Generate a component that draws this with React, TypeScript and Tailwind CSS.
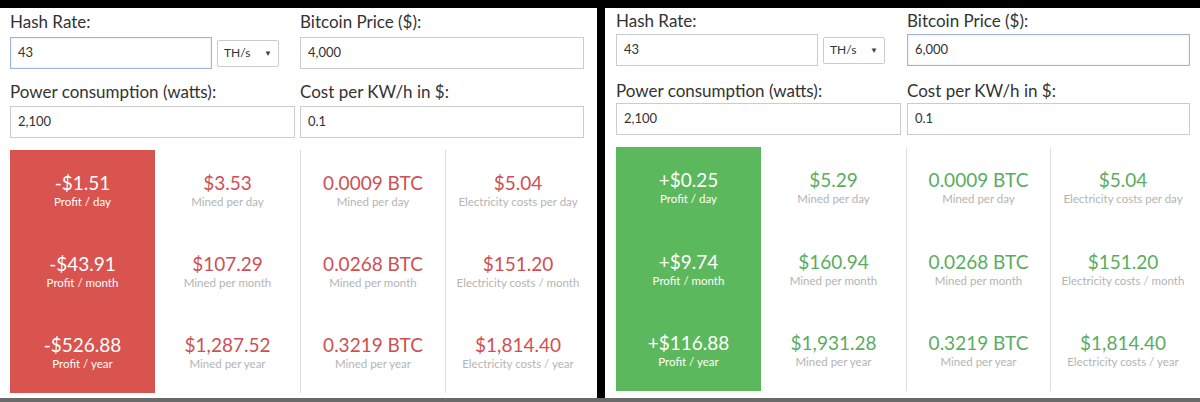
import React from "react";

type Cell = { v: string; l: string };

const leftData = {
  profit: [
    { v: "-$1.51", l: "Profit / day" },
    { v: "-$43.91", l: "Profit / month" },
    { v: "-$526.88", l: "Profit / year" },
  ],
  cols: [
    [
      { v: "$3.53", l: "Mined per day" },
      { v: "$107.29", l: "Mined per month" },
      { v: "$1,287.52", l: "Mined per year" },
    ],
    [
      { v: "0.0009 BTC", l: "Mined per day" },
      { v: "0.0268 BTC", l: "Mined per month" },
      { v: "0.3219 BTC", l: "Mined per year" },
    ],
    [
      { v: "$5.04", l: "Electricity costs per day" },
      { v: "$151.20", l: "Electricity costs / month" },
      { v: "$1,814.40", l: "Electricity costs / year" },
    ],
  ],
};

const rightData = {
  profit: [
    { v: "+$0.25", l: "Profit / day" },
    { v: "+$9.74", l: "Profit / month" },
    { v: "+$116.88", l: "Profit / year" },
  ],
  cols: [
    [
      { v: "$5.29", l: "Mined per day" },
      { v: "$160.94", l: "Mined per month" },
      { v: "$1,931.28", l: "Mined per year" },
    ],
    leftData.cols[1],
    leftData.cols[2],
  ],
};

function Field({ value, focused }: { value: string; focused?: boolean }) {
  return (
    <div
      className={
        focused
          ? "h-[32px] border border-[#9fb4dc] shadow-[inset_0_0_2px_rgba(120,150,210,0.35)] bg-white flex items-center px-[7px] text-[13px] text-[#333]"
          : "h-[32px] border border-[#cccccc] bg-white flex items-center px-[7px] text-[13px] text-[#333]"
      }
    >
      {value}
    </div>
  );
}

function Select() {
  return (
    <div className="w-[62px] h-[27px] border border-[#cccccc] rounded-[2px] bg-white flex items-center justify-between pl-[6px] pr-[6px] text-[12px] text-[#333]">
      <span>TH/s</span>
      <span className="text-[8px] text-[#444]">▼</span>
    </div>
  );
}

function ResultCol({
  cells,
  kind,
  border,
}: {
  cells: Cell[];
  kind: "loss" | "profit" | "lossText" | "profitText";
  border?: boolean;
}) {
  const box =
    kind === "loss"
      ? "bg-[#d9534f]"
      : kind === "profit"
      ? "bg-[#5cb85c]"
      : "";
  const valueColor =
    kind === "loss" || kind === "profit"
      ? "text-white"
      : kind === "lossText"
      ? "text-[#cf4f52]"
      : "text-[#5aad5e]";
  const labelColor =
    kind === "loss" || kind === "profit" ? "text-white" : "text-[#b4b4b4]";
  return (
    <div
      className={`${box} ${border ? "border-l border-[#dedede]" : ""} h-full flex flex-col justify-between items-center py-[22px] text-center`}
    >
      {cells.map((c, i) => (
        <div key={i} className="flex flex-col items-center">
          <div className={`text-[19px] leading-[22px] ${valueColor}`}>{c.v}</div>
          <div className={`text-[11.5px] leading-[15px] ${labelColor}`}>{c.l}</div>
        </div>
      ))}
    </div>
  );
}

function Panel({ side }: { side: "left" | "right" }) {
  const isLeft = side === "left";
  const data = isLeft ? leftData : rightData;
  const labelTop = `text-[17px] leading-[20px] text-[#333] ${isLeft ? "mb-[5px]" : "mb-[3px]"}`;
  const labelBottom = `text-[17px] leading-[20px] text-[#333] ${isLeft ? "mb-[4px]" : "mb-[2px]"}`;
  return (
    <div
      className={
        isLeft
          ? "w-[597px] bg-white pl-[10px] pt-[4px]"
          : "flex-1 bg-white pl-[11px] pt-[3px]"
      }
    >
      <div
        className={
          isLeft
            ? "grid grid-cols-[285px_284px] gap-x-[5px]"
            : "grid grid-cols-[285px_283px] gap-x-[6px]"
        }
      >
        <div>
          <div className={labelTop}>Hash Rate:</div>
          <div className="flex items-center gap-[5px]">
            <div className="w-[202px]">
              <Field value="43" focused={isLeft} />
            </div>
            <Select />
          </div>
        </div>
        <div>
          <div className={labelTop}>Bitcoin Price ($):</div>
          <Field value={isLeft ? "4,000" : "6,000"} focused={!isLeft} />
        </div>
        <div className={isLeft ? "mt-[13px]" : "mt-[15px]"}>
          <div className={labelBottom}>Power consumption (watts):</div>
          <Field value="2,100" />
        </div>
        <div className={isLeft ? "mt-[13px]" : "mt-[15px]"}>
          <div className={labelBottom}>Cost per KW/h in $:</div>
          <Field value="0.1" />
        </div>
      </div>
      <div
        className={
          isLeft
            ? "mt-[12px] h-[243px] grid grid-cols-[145px_145px_145px_145px]"
            : "mt-[12px] h-[244px] grid grid-cols-[145px_145px_144px_145px]"
        }
      >
        <ResultCol cells={data.profit} kind={isLeft ? "loss" : "profit"} />
        <ResultCol cells={data.cols[0]} kind={isLeft ? "lossText" : "profitText"} />
        <ResultCol cells={data.cols[1]} kind={isLeft ? "lossText" : "profitText"} border />
        <ResultCol cells={data.cols[2]} kind={isLeft ? "lossText" : "profitText"} border />
      </div>
    </div>
  );
}

export default function App() {
  return (
    <div className="w-[1200px] h-[402px] bg-black flex flex-col overflow-hidden [font-family:Lato,'Liberation_Sans',sans-serif]">
      <div className="h-[8px] shrink-0" />
      <div className="flex flex-1 min-h-0">
        <Panel side="left" />
        <div className="w-[8px] shrink-0" />
        <Panel side="right" />
      </div>
      <div className="h-[4px] shrink-0 bg-[#6a6a6a]" />
    </div>
  );
}
